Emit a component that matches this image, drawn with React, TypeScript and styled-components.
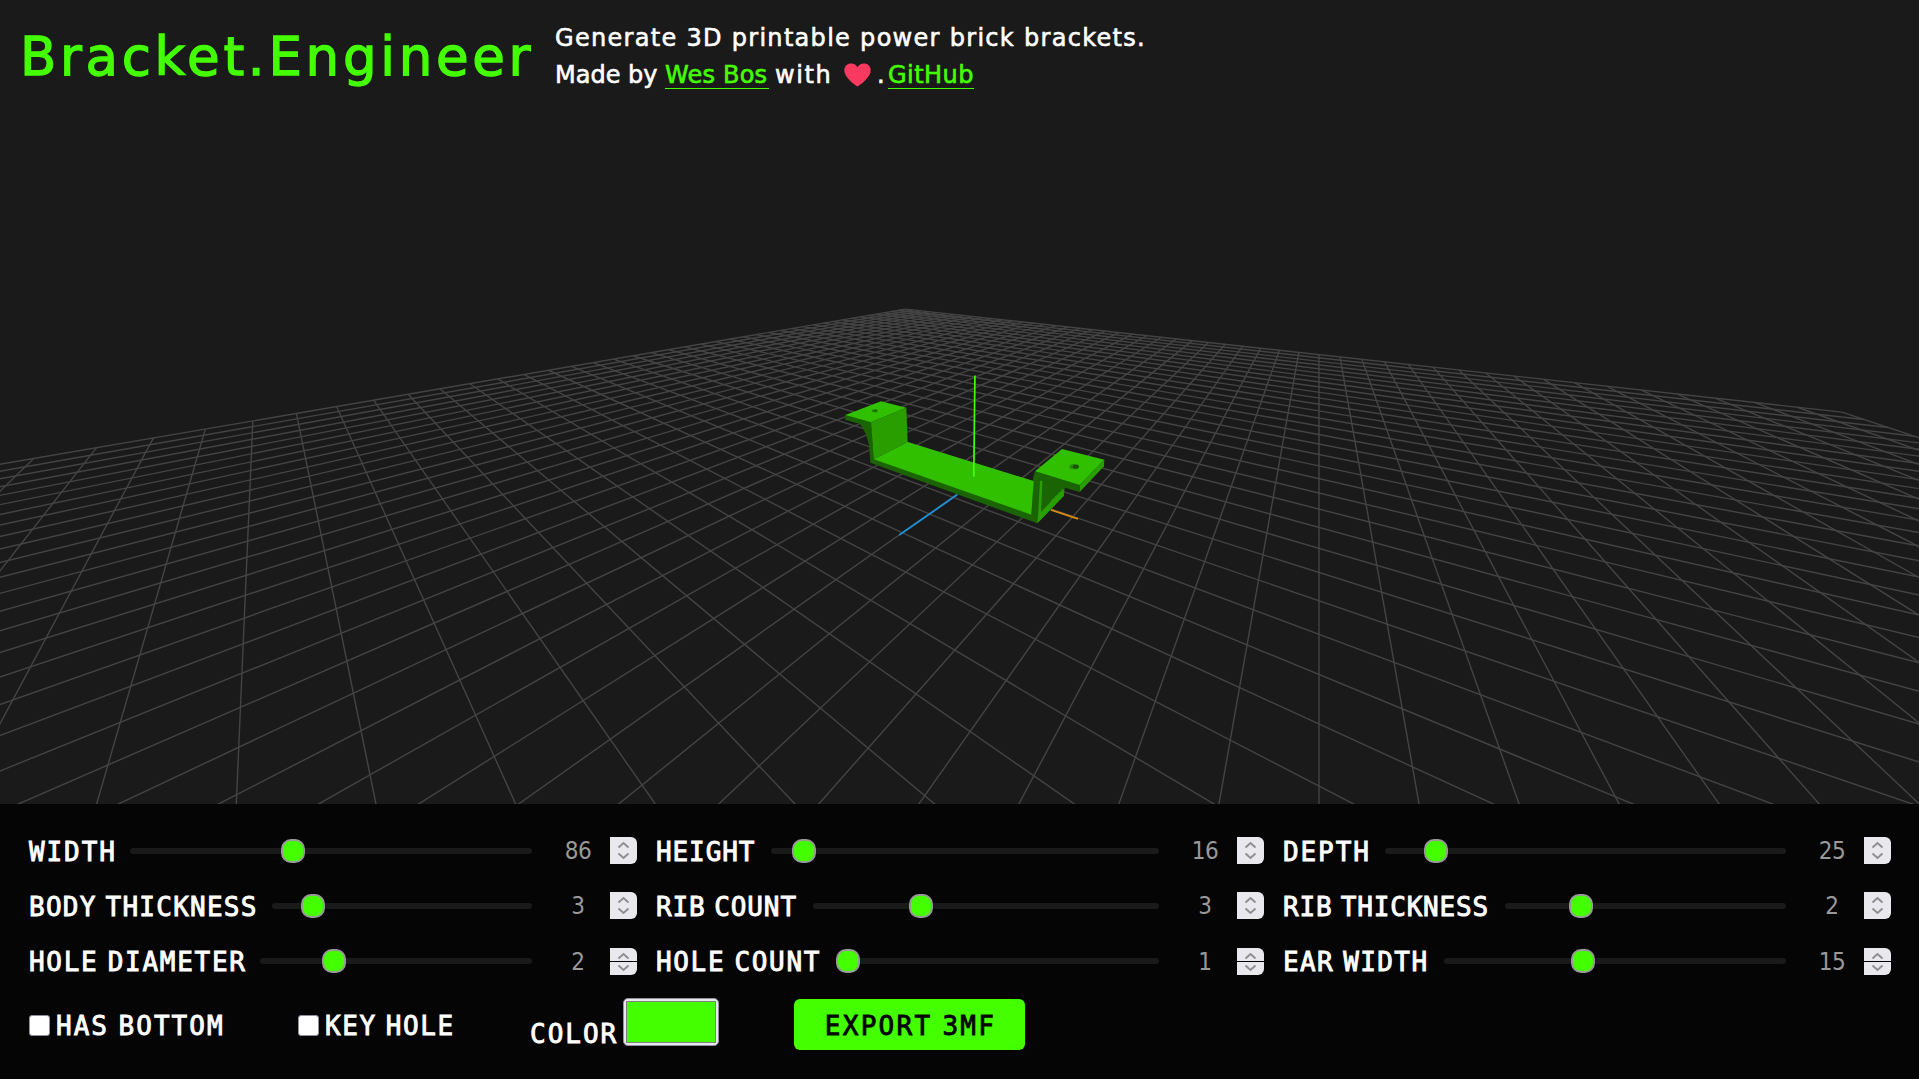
import React from "react";
import styled, { createGlobalStyle } from "styled-components";

const GREEN = "#44ff00";

const GlobalStyle = createGlobalStyle`
  * { box-sizing: border-box; }
  html, body { margin: 0; background: #1a1a1a; overflow: hidden; }
`;

const Page = styled.div`
  display: grid;
  grid-template-rows: 804px 275px;
  width: 1919px;
  height: 1079px;
  color: #fff;
  background: #1a1a1a;
  font-family: "DejaVu Sans", sans-serif;
`;

const Stage = styled.main`
  position: relative;
  overflow: hidden;
`;

const Scene = styled.svg`
  position: absolute;
  inset: 0;
  display: block;
`;

const Header = styled.header`
  position: relative;
  display: flex;
  padding: 20px 0 0 20px;
`;

const Title = styled.h1`
  margin: 0;
  width: 535px;
  height: 74px;
  font-size: 53px;
  font-weight: 400;
  line-height: 74px;
  letter-spacing: 3.7px;
  color: ${GREEN};
  -webkit-text-stroke: 1.3px ${GREEN};
  white-space: nowrap;
`;

const Intro = styled.div`
  display: flex;
  flex-direction: column;
`;

const IntroLine = styled.p<{ $spacing?: number }>`
  display: flex;
  align-items: center;
  margin: 0;
  height: 37px;
  font-size: 24px;
  line-height: 37px;
  letter-spacing: ${(p) => p.$spacing ?? 0}px;
  white-space: pre;
  -webkit-text-stroke: 0.6px currentColor;
`;

const Word = styled.span<{ $width: number; $spacing?: number }>`
  width: ${(p) => p.$width}px;
  letter-spacing: ${(p) => p.$spacing ?? 0}px;
`;

const Link = styled.a<{ $width: number; $spacing: number }>`
  width: ${(p) => p.$width}px;
  height: 28px;
  line-height: 29px;
  margin: -2px 6px 0 0;
  letter-spacing: ${(p) => p.$spacing}px;
  color: ${GREEN};
  border-bottom: 1px solid ${GREEN};
`;

const Heart = styled.svg`
  width: 27px;
  height: 24px;
  margin: -2px 6px 0 6px;
`;

const Panel = styled.section`
  display: flex;
  flex-direction: column;
  background: #050505;
  padding: 33px 28px 0 29px;
`;

const Controls = styled.div`
  display: grid;
  grid-template-columns: repeat(3, 608px);
  grid-auto-rows: 27px;
  column-gap: 19px;
  row-gap: 28px;
`;

const Control = styled.div`
  display: flex;
  align-items: center;
`;

const Label = styled.label<{ $width?: number; $spacing: number }>`
  flex: none;
  width: ${(p) => (p.$width ? `${p.$width}px` : "auto")};
  padding-top: 2px;
  font-family: "DejaVu Sans Mono", monospace;
  font-size: 26px;
  line-height: 28px;
  letter-spacing: ${(p) => p.$spacing}px;
  word-spacing: -8px;
  white-space: nowrap;
  -webkit-text-stroke: 0.9px currentColor;
`;

const Track = styled.div`
  position: relative;
  flex: 1;
  height: 6px;
  top: 0.5px;
  border-radius: 3px;
  background: #1a1a1a;
`;

const Thumb = styled.i`
  position: absolute;
  top: -9px;
  width: 24px;
  height: 24px;
  border: 2px solid #999;
  border-radius: 10px;
  background: ${GREEN};
`;

const NumberField = styled.div<{ $low?: boolean }>`
  display: flex;
  align-items: center;
  width: 105px;
  height: 27px;
  margin-top: ${(p) => (p.$low ? 2 : 0)}px;
`;

const Value = styled.span`
  width: 64px;
  margin-left: 14px;
  padding-top: 1px;
  text-align: center;
  font-family: "DejaVu Sans Condensed", "DejaVu Sans", sans-serif;
  font-stretch: condensed;
  font-size: 24px;
  line-height: 27px;
  letter-spacing: -0.4px;
  color: #999;
`;

const Spinner = styled.div<{ $split?: boolean }>`
  flex: none;
  display: flex;
  flex-direction: column;
  gap: ${(p) => (p.$split ? 1 : 0)}px;
  width: 27px;
  height: 27px;
`;

const SpinButton = styled.span<{ $down?: boolean }>`
  flex: 1;
  display: flex;
  justify-content: center;
  align-items: center;
  background: #e9e9ed;
  border-radius: ${(p) => (p.$down ? "0 0 6px 0" : "0 6px 0 0")};
  svg { display: block; margin-top: ${(p) => (p.$down ? -2 : 2)}px; }
`;

const Actions = styled.div`
  display: flex;
  height: 52px;
  margin-top: 25px;
`;

const CheckField = styled.div<{ $width: number }>`
  display: flex;
  align-items: center;
  width: ${(p) => p.$width}px;
`;

const Box = styled.span`
  width: 21px;
  height: 21px;
  margin-right: 6px;
  border: 1px solid #8f8f9d;
  border-radius: 3px;
  background: #fff;
`;

const ColorField = styled.div`
  display: flex;
  align-items: flex-start;
  width: 264px;
`;

const ColorLabel = styled(Label)`
  padding-top: 21px;
`;

const Swatch = styled.span`
  width: 96px;
  height: 48px;
  padding: 2px;
  margin-top: -1px;
  border: 1px solid #8f8f9d;
  border-radius: 5px;
  background: #e9e9ed;
`;

const SwatchFill = styled.span`
  display: block;
  height: 100%;
  border: 1px solid #808080;
  background: ${GREEN};
`;

const ExportButton = styled.button`
  width: 231px;
  height: 51px;
  padding: 3px 0 0 2px;
  border: 0;
  border-radius: 6px;
  background: ${GREEN};
  color: #050505;
  font-family: "DejaVu Sans Mono", monospace;
  font-size: 26px;
  letter-spacing: 2.3px;
  word-spacing: -8px;
  -webkit-text-stroke: 0.9px currentColor;
`;

/* Ground plane in perspective. Both families of lines meet on the horizon:
   each is given by its vanishing point and its spacing on the bottom edge. */
const HORIZON = 238.2;
const DEPTH = 565.5;
const RIGHT_VP = 1319;
const LEFT_VP = 260.7;

const denom = (i: number, j: number) => 139.6 * j - 24.4 - 100 * i;

const project = (i: number, j: number) => {
  const t = (RIGHT_VP - LEFT_VP) / denom(i, j);
  return [RIGHT_VP + 100 * i * t, HORIZON + DEPTH * t];
};

const NEAR = 500;

const segment = (a: [number, number], b: [number, number]) => {
  const da = denom(...a);
  const db = denom(...b);
  if (da < NEAR && db < NEAR) return "";
  const cut = (p: [number, number], dp: number, q: [number, number], dq: number): [number, number] => {
    if (dp >= NEAR) return p;
    const k = (NEAR - dp) / (dq - dp);
    return [p[0] + (q[0] - p[0]) * k, p[1] + (q[1] - p[1]) * k];
  };
  const [x1, y1] = project(...cut(a, da, b, db));
  const [x2, y2] = project(...cut(b, db, a, da));
  return `M${x1.toFixed(2)} ${y1.toFixed(2)}L${x2.toFixed(2)} ${y2.toFixed(2)}`;
};

const gridLines = Array.from({ length: 51 }, (_, n) => [
  segment([n - 33, -13], [n - 33, 37]),
  segment([-33, n - 13], [17, n - 13]),
]).flat().filter(Boolean);

const TOP = "#30c000";
const SIDE = "#289e00";
const FRONT = "#1a6404";

const Viewport = () => (
  <Scene width="1919" height="804" viewBox="0 0 1919 804">
    <g fill="none" stroke="#444" strokeWidth="1.4">
      {gridLines.map((d) => <path key={d} d={d} />)}
    </g>
    <path d="M899.3 535L957.5 494.6" stroke="#1c8fd6" strokeWidth="1.8" />
    <path d="M1051 509.8L1078 518.8" stroke="#d98a12" strokeWidth="1.8" />
    <g transform="translate(820 360) scale(0.33333)">
      <path fill={FRONT} d="M76 164L153 186L161 297L634 463L640 350L645 334L665 340L735 384L732 407L652 490L151 308L147 255Q138 215 120 192L76 179Z" />
      <path fill={TOP} d="M76 165L183 124L259 143L153 187Z" />
      <path fill={SIDE} d="M153 187L259 143L263 246L161 298Z" />
      <path fill={TOP} d="M161 298L263 246L641 363L634 464Z" />
      <path fill={SIDE} d="M652 490L732 407L731 384L663 455L668 362L660 362L655 455Z" />
      <path fill={FRONT} d="M665 340L779 375L779 396L734 383L700 416L665 453L668 362Z" />
      <path stroke={SIDE} strokeWidth="2.5" strokeDasharray="9 5" fill="none" d="M694 422L727 388" />
      <path fill={TOP} d="M726 267L853 299L779 375L645 334Z" />
      <path fill={SIDE} d="M779 375L853 299L852 319L779 396Z" />
      <ellipse cx="164" cy="152" rx="9" ry="4.5" fill="#23820a" />
      <ellipse cx="167" cy="152" rx="5" ry="3" fill="#1a6404" />
      <ellipse cx="763" cy="320" rx="15" ry="8" fill="#258c08" />
      <ellipse cx="767" cy="320" rx="9" ry="5.5" fill="#174f08" />
    </g>
    <path d="M974.9 375.4L973.8 476.8" stroke={GREEN} strokeWidth="1.7" />
  </Scene>
);

const Chevron = ({ down }: { down?: boolean }) => (
  <svg width="13" height="8" viewBox="0 0 13 8">
    <path d={down ? "M1.5 1.5L6.5 6L11.5 1.5" : "M1.5 6.5L6.5 2L11.5 6.5"} fill="none" stroke="#8f8f8f" strokeWidth="2" />
  </svg>
);

type Param = { name: string; space: number; width: number; at: number; value: number };

const PARAMS: Param[] = [
  { name: "WIDTH", space: 1.9, width: 101, at: 0.4, value: 86 },
  { name: "HEIGHT", space: 0.9, width: 115, at: 0.057, value: 16 },
  { name: "DEPTH", space: 1.9, width: 101.5, at: 0.1035, value: 25 },
  { name: "BODY THICKNESS", space: 1.25, width: 243, at: 0.123, value: 3 },
  { name: "RIB COUNT", space: 0.9, width: 157, at: 0.297, value: 3 },
  { name: "RIB THICKNESS", space: 0.8, width: 221.5, at: 0.25, value: 2 },
  { name: "HOLE DIAMETER", space: 1.7, width: 231, at: 0.25, value: 2 },
  { name: "HOLE COUNT", space: 1.65, width: 180, at: 0, value: 1 },
  { name: "EAR WIDTH", space: 1.4, width: 160.5, at: 0.4, value: 15 },
];

export default function App() {
  return (
    <Page>
      <GlobalStyle />
      <Stage>
        <Viewport />
        <Header>
          <Title>Bracket.Engineer</Title>
          <Intro>
            <IntroLine $spacing={1.3}>Generate 3D printable power brick brackets.</IntroLine>
            <IntroLine>
              <Word $width={110}>Made by </Word>
              <Link $width={104} $spacing={0.2}>Wes Bos</Link>
              <Word $width={63} $spacing={1.6}>with</Word>
              <Heart viewBox="0 0 27 24">
                <path d="M13.5 23.6C9 20.5 .3 14 .3 7.2C.3 2.8 3.4.4 7 .4C10 .4 12.4 2 13.5 4.3C14.6 2 17 .4 20 .4C23.6.4 26.7 2.8 26.7 7.2C26.7 14 18 20.5 13.5 23.6Z" fill="#f83a61" />
              </Heart>
              <Word $width={11}>.</Word>
              <Link $width={86} $spacing={0.45}>GitHub</Link>
            </IntroLine>
          </Intro>
        </Header>
      </Stage>
      <Panel>
        <Controls>
          {PARAMS.map((p, n) => (
            <Control key={p.name}>
              <Label $width={p.width} $spacing={p.space}>{p.name}</Label>
              <Track>
                <Thumb style={{ left: `calc(${p.at} * (100% - 24px))` }} />
              </Track>
              <NumberField $low={n > 5}>
                <Value>{p.value}</Value>
                <Spinner $split={n > 5}>
                  <SpinButton><Chevron /></SpinButton>
                  <SpinButton $down><Chevron down /></SpinButton>
                </Spinner>
              </NumberField>
            </Control>
          ))}
        </Controls>
        <Actions>
          <CheckField $width={269}>
            <Box />
            <Label $spacing={2}>HAS BOTTOM</Label>
          </CheckField>
          <CheckField $width={232}>
            <Box />
            <Label $spacing={1.55}>KEY HOLE</Label>
          </CheckField>
          <ColorField>
            <ColorLabel $width={93} $spacing={2}>COLOR</ColorLabel>
            <Swatch><SwatchFill /></Swatch>
          </ColorField>
          <ExportButton>EXPORT 3MF</ExportButton>
        </Actions>
      </Panel>
    </Page>
  );
}
